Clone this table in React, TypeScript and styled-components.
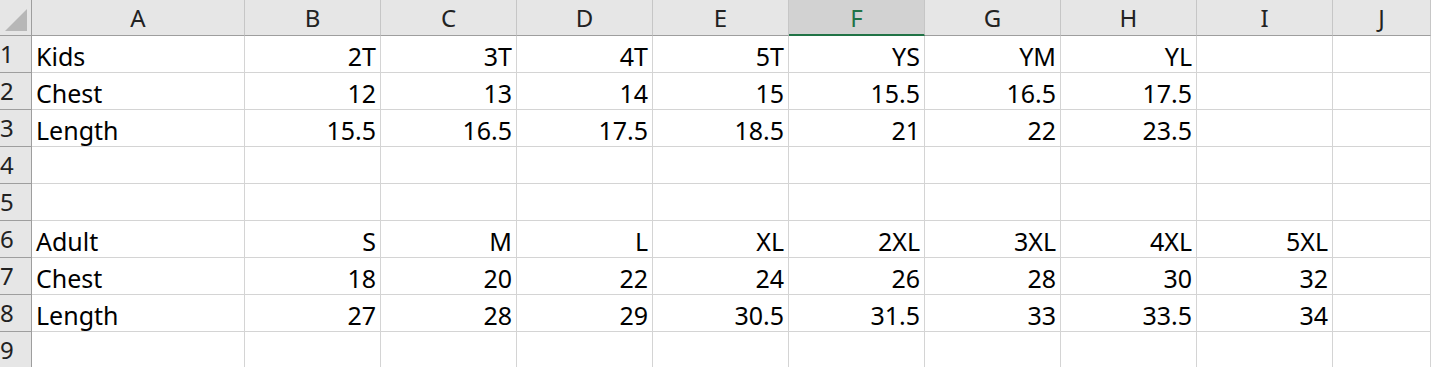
import styled, { createGlobalStyle } from "styled-components";

const GlobalStyle = createGlobalStyle`
	html, body {
		margin: 0;
		padding: 0;
		background: #ffffff;
		overflow: hidden;
	}
	body {
		font-family: "Noto Sans", "Liberation Sans", Arial, sans-serif;
	}
`;

const columns = ["A", "B", "C", "D", "E", "F", "G", "H", "I", "J"];
const selectedColumn = "F";

const rows: string[][] = [
	["Kids", "2T", "3T", "4T", "5T", "YS", "YM", "YL", "", ""],
	["Chest", "12", "13", "14", "15", "15.5", "16.5", "17.5", "", ""],
	["Length", "15.5", "16.5", "17.5", "18.5", "21", "22", "23.5", "", ""],
	["", "", "", "", "", "", "", "", "", ""],
	["", "", "", "", "", "", "", "", "", ""],
	["Adult", "S", "M", "L", "XL", "2XL", "3XL", "4XL", "5XL", ""],
	["Chest", "18", "20", "22", "24", "26", "28", "30", "32", ""],
	["Length", "27", "28", "29", "30.5", "31.5", "33", "33.5", "34", ""],
	["", "", "", "", "", "", "", "", "", ""],
];

const App = () => {
	return (
		<>
			<GlobalStyle />
			<Sheet>
				<Corner>
					<CornerTriangle />
				</Corner>
				{columns.map((col) => (
					<ColumnHeader key={col} $selected={col === selectedColumn}>
						{col}
					</ColumnHeader>
				))}
				{rows.map((row, r) => (
					<Row key={r}>
						<RowHeader>{r + 1}</RowHeader>
						{row.map((value, c) => (
							<Cell key={c} $text={c === 0}>
								{value}
							</Cell>
						))}
					</Row>
				))}
			</Sheet>
		</>
	);
};

const Sheet = styled.div`
	display: grid;
	grid-template-columns: 32px 213px repeat(8, 136px) 1fr;
	grid-template-rows: 36px;
	grid-auto-rows: 37px;
	width: 1431px;
	height: 367px;
	overflow: hidden;
	font-size: 25px;
	color: #000;
`;

const Row = styled.div`
	display: contents;
`;

const Corner = styled.div`
	position: relative;
	box-sizing: border-box;
	background: #e6e6e6;
	border-right: 1px solid #9e9e9e;
	border-bottom: 1px solid #9e9e9e;
`;

const CornerTriangle = styled.div`
	position: absolute;
	right: 4px;
	bottom: 4px;
	width: 0;
	height: 0;
	border-left: 22px solid transparent;
	border-bottom: 22px solid #b7b7b7;
`;

const ColumnHeader = styled.div<{ $selected?: boolean }>`
	box-sizing: border-box;
	display: flex;
	align-items: center;
	justify-content: center;
	background: ${(p) => (p.$selected ? "#d2d2d2" : "#e6e6e6")};
	color: ${(p) => (p.$selected ? "#217346" : "#222")};
	border-right: 1px solid #c6c6c6;
	border-bottom: ${(p) => (p.$selected ? "2px solid #217346" : "1px solid #9e9e9e")};
	padding-top: ${(p) => (p.$selected ? "1px" : "0")};
	font-size: 24px;
	line-height: 1;
`;

const RowHeader = styled.div`
	box-sizing: border-box;
	display: flex;
	align-items: center;
	justify-content: flex-start;
	padding-left: 0;
	background: #e6e6e6;
	border-right: 1px solid #9e9e9e;
	border-bottom: 1px solid #9e9e9e;
	color: #222;
	font-size: 24px;
	line-height: 1;
`;

const Cell = styled.div<{ $text?: boolean }>`
	box-sizing: border-box;
	display: flex;
	align-items: flex-end;
	justify-content: ${(p) => (p.$text ? "flex-start" : "flex-end")};
	padding: 0 4px 0 4px;
	border-right: 1px solid #d4d4d4;
	border-bottom: 1px solid #d4d4d4;
	white-space: nowrap;
	line-height: 1.3;
`;

export default App;
